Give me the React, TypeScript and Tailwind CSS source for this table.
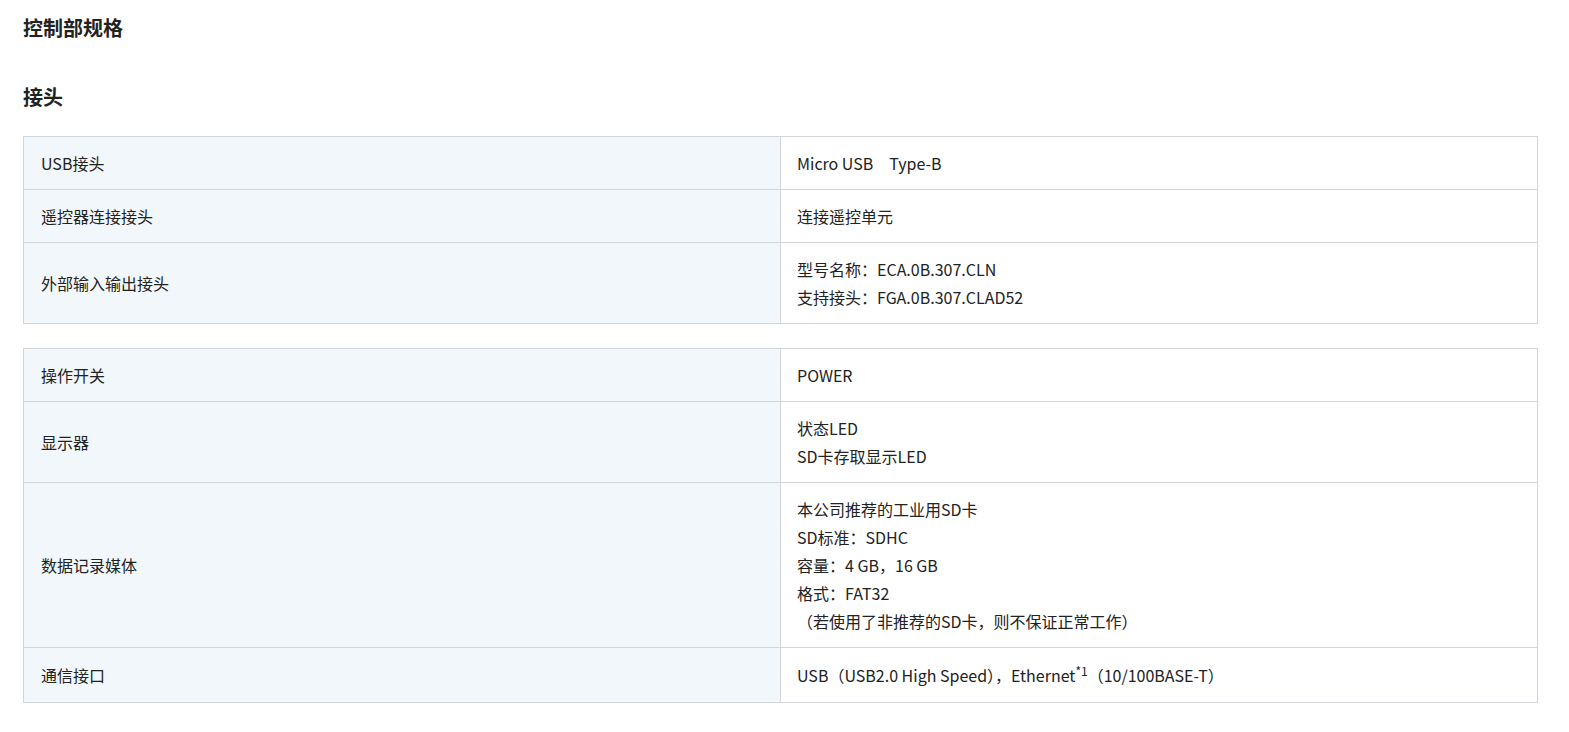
import { ReactNode } from 'react';

type Row = { label: string; value: ReactNode[]; tall?: boolean };

const connectors: Row[] = [
  { label: 'USB接头', value: ['Micro USB\u3000Type-B'] },
  { label: '遥控器连接接头', value: ['连接遥控单元'] },
  { label: '外部输入输出接头', value: ['型号名称：ECA.0B.307.CLN', '支持接头：FGA.0B.307.CLAD52'] },
];

const others: Row[] = [
  { label: '操作开关', value: ['POWER'] },
  { label: '显示器', value: ['状态LED', 'SD卡存取显示LED'] },
  {
    label: '数据记录媒体',
    value: [
      '本公司推荐的工业用SD卡',
      'SD标准：SDHC',
      '容量：4 GB，16 GB',
      '格式：FAT32',
      '（若使用了非推荐的SD卡，则不保证正常工作）',
    ],
  },
  {
    label: '通信接口',
    tall: true,
    value: [
      <>
        USB（USB2.0 High Speed），Ethernet
        <sup className="static align-super text-[12px]">*1</sup>（10/100BASE-T）
      </>,
    ],
  },
];

function SpecTable({ rows }: { rows: Row[] }) {
  return (
    <table className="w-full table-fixed border-collapse border border-[#d2d5da]">
      <tbody>
        {rows.map((row) => (
          <tr key={row.label}>
            <th className="w-1/2 border border-[#d2d5da] bg-[#f2f7fb] px-[17px] py-3 text-left font-normal align-middle">
              {row.label}
            </th>
            <td
              className={`w-1/2 border border-[#d2d5da] bg-white px-[16px] align-middle ${
                row.tall ? 'pt-[13px] pb-[13px]' : 'py-3'
              }`}
            >
              {row.value.map((v, i) => (
                <div key={i}>{v}</div>
              ))}
            </td>
          </tr>
        ))}
      </tbody>
    </table>
  );
}

export default function App() {
  return (
    <div
      className="min-h-screen bg-white pt-[13px] pl-[23px] pr-[31px] text-[16px] leading-[28px] text-[#222]"
      style={{ fontFamily: '"Noto Sans CJK SC", "Noto Sans", sans-serif' }}
    >
      <h2 className="text-[20px] leading-[30px] font-bold">控制部规格</h2>
      <h3 className="mt-[39px] mb-[24px] text-[20px] leading-[30px] font-bold">接头</h3>
      <SpecTable rows={connectors} />
      <div className="mt-[24px]">
        <SpecTable rows={others} />
      </div>
    </div>
  );
}
